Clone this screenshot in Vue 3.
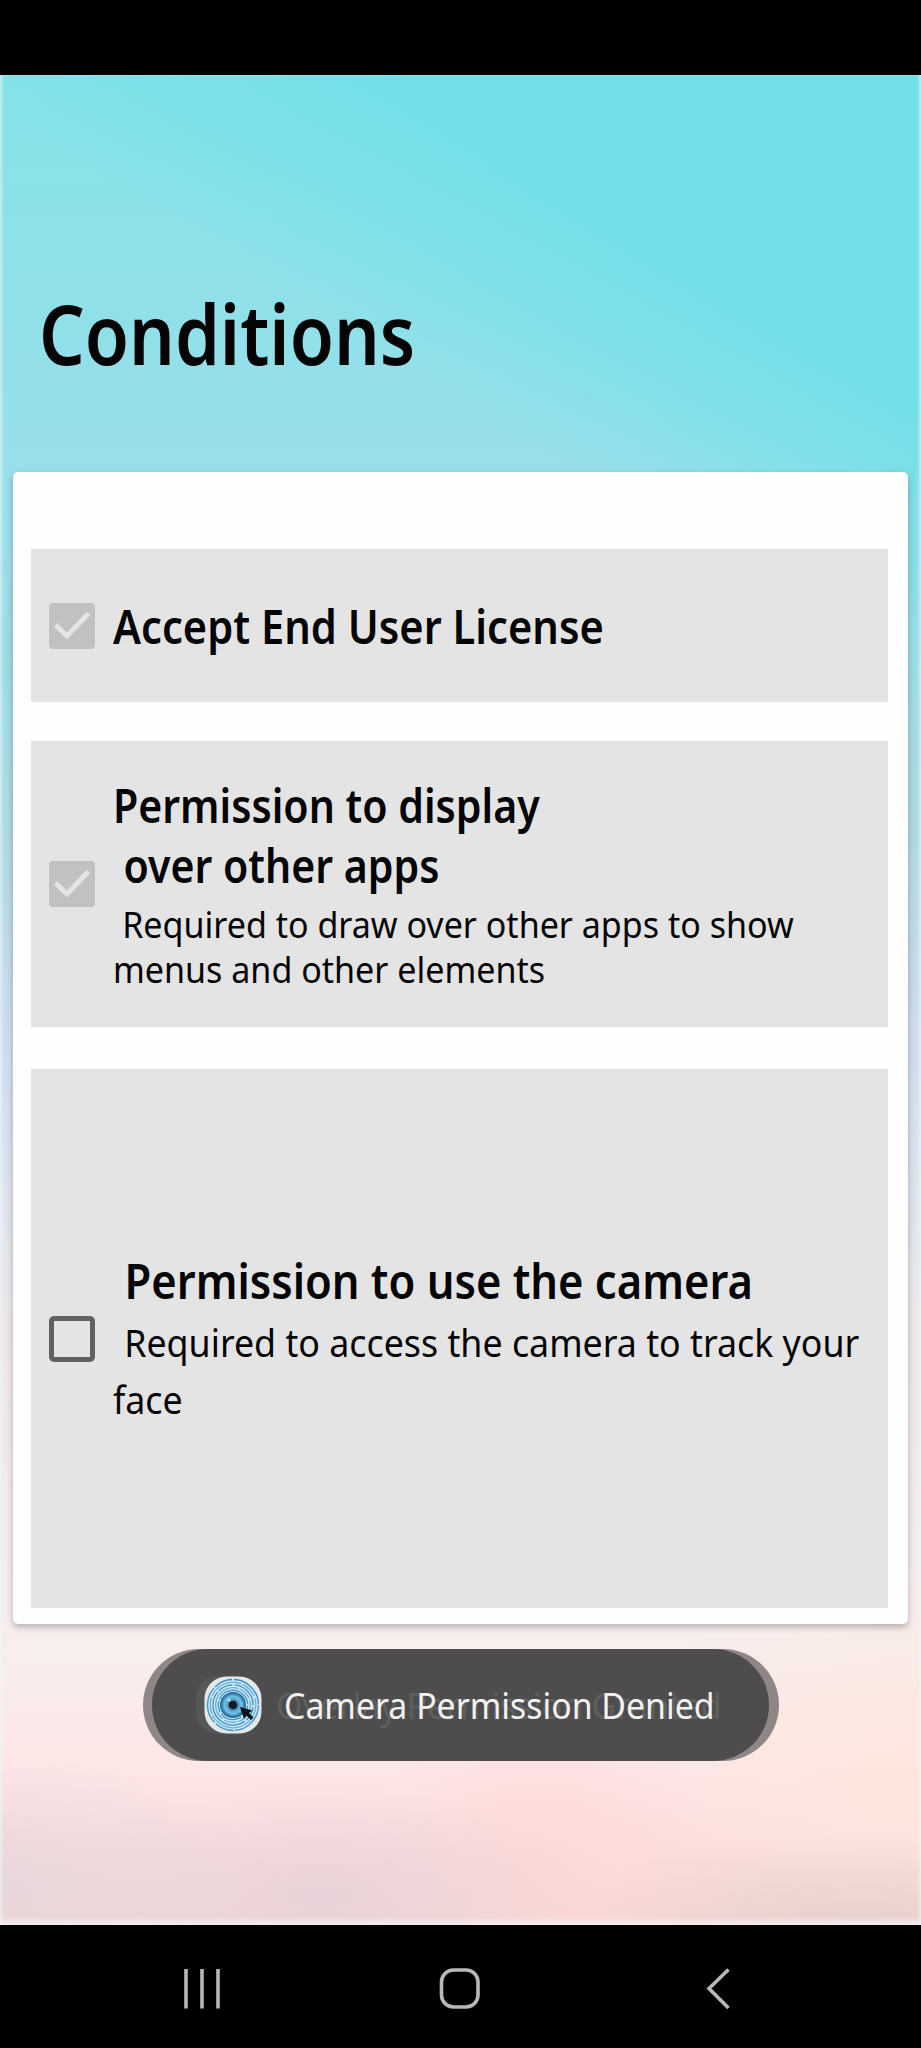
<script setup>
const conditions = [
  {
    id: 'license',
    checked: true,
    lines: [{ text: 'Accept End User License', cls: 'title t-license' }]
  },
  {
    id: 'overlay',
    checked: true,
    lines: [
      { text: 'Permission to display', cls: 'title t-display' },
      { text: 'over other apps', cls: 'title t-over' },
      { text: 'Required to draw over other apps to show', cls: 'note n-draw' },
      { text: 'menus and other elements', cls: 'note n-menus' }
    ]
  },
  {
    id: 'camera',
    checked: false,
    lines: [
      { text: 'Permission to use the camera', cls: 'title t-camera' },
      { text: 'Required to access the camera to track your', cls: 'note n-access' },
      { text: 'face', cls: 'note n-face' }
    ]
  }
]
const rings = [27, 24.3, 21.6, 18.9, 16.2]
</script>

<template>
  <div class="phone">
    <div class="status"></div>
    <main class="screen">
      <h1 class="heading">Conditions</h1>
      <section class="card">
        <div v-for="c in conditions" :key="c.id" class="row" :class="c.id">
          <svg class="box" viewBox="0 0 46 46">
            <template v-if="c.checked">
              <rect width="46" height="46" rx="4" fill="#c1c1c1" />
              <path d="M6.5 22 18 33 39.5 10.5" fill="none" stroke="#e4e4e4" stroke-width="5" />
            </template>
            <rect v-else x="2.5" y="2.5" width="41" height="41" rx="2.5" fill="none" stroke="#616161" stroke-width="5" />
          </svg>
          <div class="copy">
            <div v-for="l in c.lines" :key="l.text" :class="l.cls">{{ l.text }}</div>
          </div>
        </div>
      </section>
      <div class="toasts">
        <div class="toast back">
          <span class="ghost-icon"></span>
          <span class="ghost-text">Overlay Permission Granted</span>
        </div>
        <div class="toast front">
          <svg class="app" viewBox="0 0 58 58">
            <defs>
              <radialGradient id="iris">
                <stop offset="0.3" stop-color="#3b86b4" />
                <stop offset="0.65" stop-color="#78c2e8" />
                <stop offset="0.85" stop-color="#3688b8" />
                <stop offset="1" stop-color="#1d5a80" />
              </radialGradient>
            </defs>
            <rect x="0.5" y="0.5" width="57" height="57" rx="22" fill="#e3e7e8" />
            <circle cx="29" cy="29" r="25.5" fill="#cfe7f3" />
            <circle
              v-for="(r, i) in rings"
              :key="r"
              cx="29"
              cy="29"
              :r="r - 1.5"
              fill="none"
              :stroke="i % 2 ? '#65b1dc' : '#3a93ca'"
              stroke-width="1.3"
              :stroke-dasharray="`${r * 1.4} 1.5 ${r * 0.7} 2`"
              :transform="`rotate(${i * 67} 29 29)`"
            />
            <circle cx="29" cy="29" r="13" fill="url(#iris)" />
            <circle cx="29" cy="29" r="4.3" fill="#121b22" />
            <circle cx="25" cy="24" r="1.6" fill="#b9e4f7" />
            <path d="M36 31 48.5 34.5 45 37 49.5 41.5 47 44 42.5 39.5 40 43Z" fill="#0b1218" />
          </svg>
          <span class="toast-text">Camera Permission Denied</span>
        </div>
      </div>
    </main>
    <nav class="nav">
      <svg viewBox="0 0 921 123">
        <g fill="none" stroke="#b8b8b8" stroke-width="3.6">
          <path d="M186 44v39.5M202 44v39.5M218 44v39.5" />
          <rect x="441.5" y="45" width="36.5" height="37" rx="12" />
          <path d="M728.5 44.5 709 63.5 728.5 83" />
        </g>
      </svg>
    </nav>
  </div>
</template>

<style>
body {
  margin: 0;
}
</style>

<style scoped>
.phone {
  width: 921px;
  height: 2048px;
  display: flex;
  flex-direction: column;
  overflow: hidden;
  background: #000;
  color: #040404;
  font-family: 'Noto Sans', 'Open Sans', sans-serif;
}
.status {
  height: 75px;
  flex: none;
}
.screen {
  height: 1850px;
  flex: none;
  box-sizing: border-box;
  padding: 0 13px;
  box-shadow: inset 3px 0 3px -1px rgba(240, 250, 250, 0.6), inset -3px 0 3px -1px rgba(240, 250, 250, 0.6),
    inset 0 -8px 4px -3px rgba(244, 240, 240, 0.8);
  background:
    radial-gradient(ellipse 260px 130px at 0 1810px, rgba(224, 212, 218, 0.75), transparent),
    radial-gradient(ellipse 280px 110px at 320px 1820px, rgba(230, 209, 215, 0.85), transparent),
    radial-gradient(ellipse 180px 170px at 540px 1790px, rgba(255, 213, 209, 0.6), transparent),
    radial-gradient(ellipse 300px 90px at 860px 1850px, rgba(230, 207, 204, 0.9), transparent),
    radial-gradient(ellipse 300px 220px at 921px 1700px, rgba(254, 230, 219, 0.8), transparent),
    linear-gradient(212deg, #70dfe9 0, #70dfe9 270px, rgba(112, 223, 233, 0) 520px) 0 0 / 100% 700px no-repeat,
    linear-gradient(#86e2e8 0, #98dfea 400px, #9edce5 600px, #b0dae2 770px, #cfdcef 960px, #e1e6ed 1160px, #ece7ea 1240px, #f4ebec 1480px, #f7eeed 1580px, #fde6e6 1690px, #fbdfdf 1770px, #f6d8d6 1850px);
}
.heading {
  height: 397px;
  margin: 0;
  padding: 201px 0 0 26px;
  box-sizing: border-box;
  font-size: 83px;
  line-height: 113px;
  font-weight: 600;
  white-space: nowrap;
  transform: scaleX(0.865);
  transform-origin: 26px 0;
}
.card {
  height: 1152px;
  box-sizing: border-box;
  padding: 77px 20px 16px 18px;
  border-radius: 5px;
  background: #fefefe;
  box-shadow: 0 3px 6px rgba(70, 60, 70, 0.35);
}
.row {
  display: flex;
  align-items: center;
  box-sizing: border-box;
  padding-left: 17.5px;
  background: #e4e4e4;
}
.license {
  height: 153px;
}
.overlay {
  height: 286px;
  margin-top: 39px;
}
.overlay .copy {
  margin-bottom: 2px;
}
.camera {
  height: 539px;
  margin-top: 42px;
}
.box {
  width: 46px;
  height: 46px;
  flex: none;
}
.copy {
  width: 770px;
  margin-left: 18px;
}
.title,
.note {
  width: max-content;
  white-space: nowrap;
  transform-origin: 0 0;
}
.title {
  font-size: 47px;
  line-height: 60px;
  font-weight: 600;
  transform: scaleX(0.874);
}
.t-license {
  transform: scaleX(0.886);
}
.note {
  font-size: 37px;
  line-height: 45px;
  transform: scaleX(0.92);
}
.t-over {
  padding-left: 12px;
}
.n-draw {
  margin-top: 6px;
  padding-left: 10px;
}
.t-camera {
  font-size: 49px;
  padding-left: 13px;
  transform: scaleX(0.888);
}
.n-access,
.n-face {
  font-size: 38.5px;
  line-height: 57px;
  transform: scaleX(0.929);
}
.n-access {
  margin-top: 4px;
  padding-left: 12px;
}
.toasts {
  display: grid;
  justify-content: center;
  margin-top: 25px;
}
.toast {
  grid-area: 1 / 1;
  justify-self: center;
  box-sizing: border-box;
  display: flex;
  align-items: center;
  height: 112px;
  border-radius: 56px;
  font-size: 35.5px;
  white-space: nowrap;
}
.back {
  width: 636px;
  padding-left: 53px;
  background: #8f8686;
}
.front {
  z-index: 1;
  width: 617px;
  padding-left: 52px;
  background: rgba(64, 63, 63, 0.82);
  color: #f2f2f2;
}
.ghost-icon {
  width: 58px;
  height: 58px;
  flex: none;
  border-radius: 22px;
  background: #b4c8cc;
}
.ghost-text,
.toast-text {
  transform: scaleX(0.953);
  transform-origin: 0 0;
}
.ghost-text {
  margin-left: 22px;
  color: #e8e8e8;
}
.app {
  width: 58px;
  height: 58px;
  flex: none;
}
.toast-text {
  margin-left: 22px;
}
.nav {
  height: 123px;
  flex: none;
}
.nav svg {
  display: block;
  width: 921px;
  height: 123px;
}
</style>
